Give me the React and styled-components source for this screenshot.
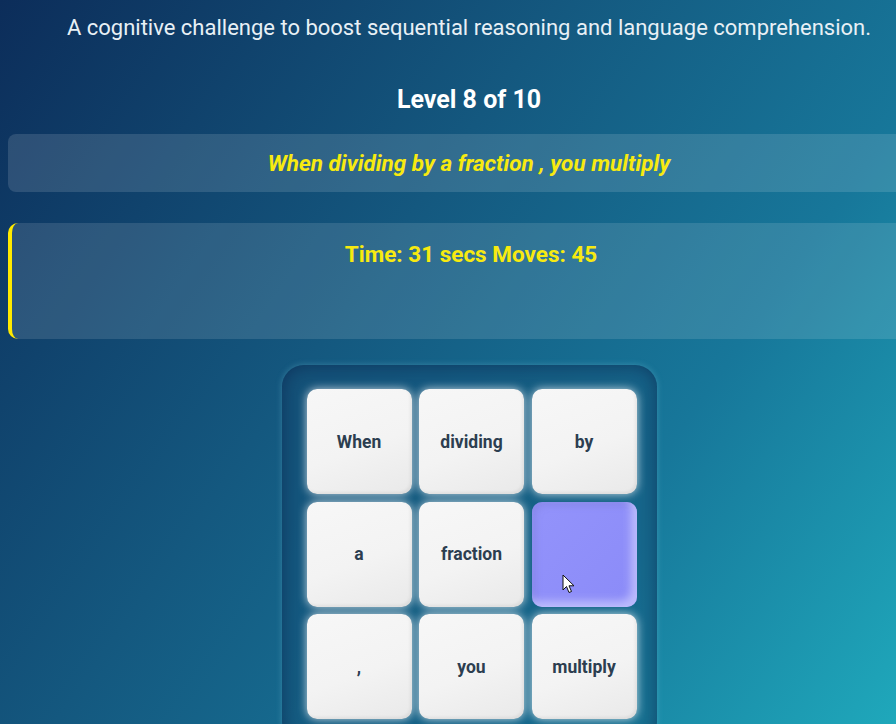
import styled, { createGlobalStyle } from "styled-components";

const tiles = ["When", "dividing", "by", "a", "fraction", null, ",", "you", "multiply"];

const GlobalStyle = createGlobalStyle`
  html, body {
    margin: 0;
    padding: 0;
    overflow: hidden;
  }
  body {
    width: 896px;
    height: 724px;
    font-family: Roboto, "Liberation Sans", sans-serif;
    background: linear-gradient(125deg, #0c2d5a 0%, #14587f 40%, #17779a 70%, #1fa8bb 100%);
  }
`;

const Page = styled.div`
  width: 922px;
  margin-left: 8px;
  display: flex;
  flex-direction: column;
  align-items: center;
`;

const Subtitle = styled.p`
  margin: 13px 0 0;
  font-size: 22px;
  line-height: 30px;
  color: #e8f0f6;
  text-align: center;
  white-space: nowrap;
`;

const Level = styled.h2`
  margin: 41px 0 0;
  font-size: 25px;
  line-height: 32px;
  font-weight: 700;
  color: #ffffff;
`;

const PhraseBar = styled.div`
  align-self: stretch;
  margin-top: 18px;
  height: 58px;
  border-radius: 8px;
  background: rgba(255, 255, 255, 0.13);
  display: flex;
  align-items: center;
  justify-content: center;
  font-size: 22.5px;
  font-weight: 700;
  font-style: italic;
  color: #f7ea10;
`;

const StatsPanel = styled.div`
  align-self: stretch;
  margin-top: 31px;
  height: 116px;
  box-sizing: border-box;
  border-left: 4px solid #ffea00;
  border-radius: 10px;
  background: rgba(255, 255, 255, 0.12);
  padding-top: 18px;
  text-align: center;
  font-size: 22.5px;
  font-weight: 700;
  color: #f7ea10;
`;

const Board = styled.div`
  margin-top: 26px;
  padding: 24px 20px 24px 25px;
  border-radius: 22px;
  background: rgba(20, 70, 110, 0.35);
  box-shadow: inset 0 0 18px rgba(10, 30, 70, 0.55), 0 0 6px rgba(120, 200, 220, 0.35);
  display: grid;
  grid-template-columns: repeat(3, 105px);
  grid-auto-rows: 105px;
  gap: 7.5px;
`;

const Tile = styled.div`
  border-radius: 10px;
  display: flex;
  align-items: center;
  justify-content: center;
  font-size: 17.5px;
  font-weight: 700;
  color: #2c3e50;
  background: ${(p) =>
    p.$empty
      ? "linear-gradient(135deg, #9393fb 0%, #8b8bf8 100%)"
      : "linear-gradient(160deg, #f7f7f7 0%, #f3f3f3 55%, #e9e9e9 100%)"};
  box-shadow: ${(p) =>
    p.$empty
      ? "inset -6px -6px 8px rgba(220, 220, 255, 0.6), inset 4px 4px 6px rgba(120, 120, 210, 0.35)"
      : "0 0 10px rgba(255, 255, 255, 0.75), inset -2px -2px 3px rgba(0, 0, 0, 0.06)"};
  position: relative;
`;

const Cursor = styled.svg`
  position: absolute;
  left: 30px;
  top: 72px;
`;

export default function App() {
  return (
    <>
      <GlobalStyle />
      <Page>
        <Subtitle>A cognitive challenge to boost sequential reasoning and language comprehension.</Subtitle>
        <Level>Level 8 of 10</Level>
        <PhraseBar>When dividing by a fraction , you multiply</PhraseBar>
        <StatsPanel>Time: 31 secs Moves: 45</StatsPanel>
        <Board>
          {tiles.map((t, i) =>
            t === null ? (
              <Tile key={i} $empty>
                <Cursor width="13" height="20" viewBox="0 0 13 20">
                  <path d="M1 1 L1 16 L4.5 12.5 L7 18.5 L9.5 17.5 L7 11.8 L12 11.8 Z" fill="#fff" stroke="#111" strokeWidth="1" strokeLinejoin="round" />
                </Cursor>
              </Tile>
            ) : (
              <Tile key={i}>{t}</Tile>
            )
          )}
        </Board>
      </Page>
    </>
  );
}
